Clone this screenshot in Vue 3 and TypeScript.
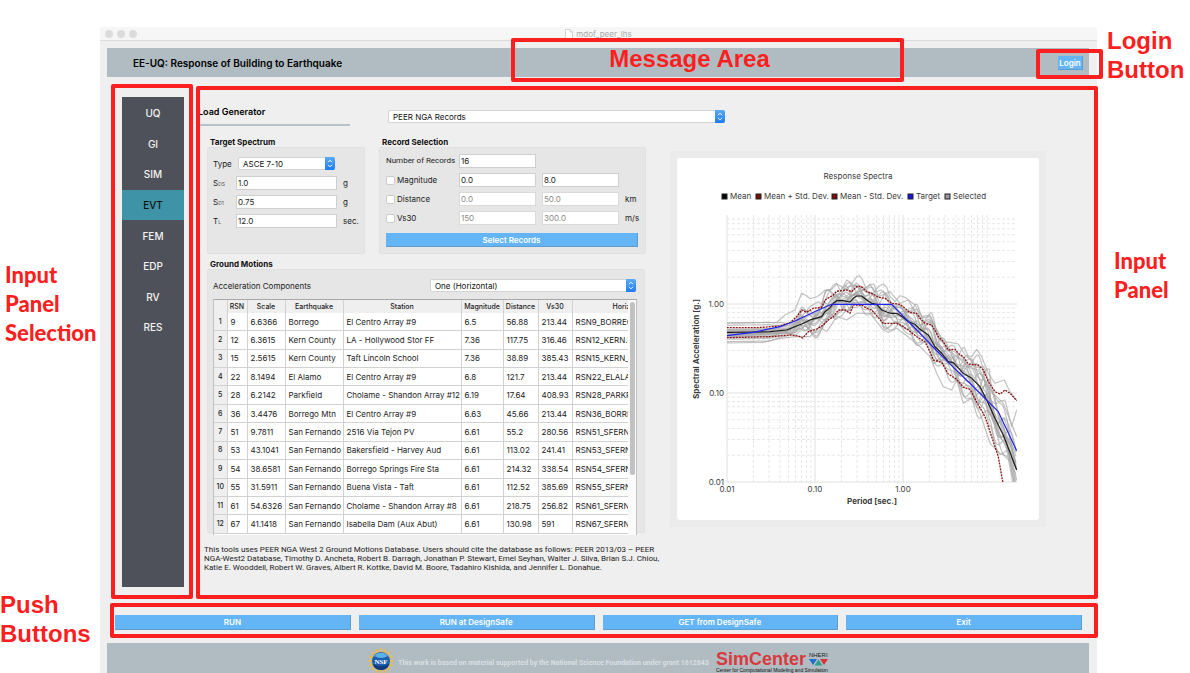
<script setup lang="ts">
import { ref } from 'vue'

type Pt = [number, number]

const sections = ['UQ', 'GI', 'SIM', 'EVT', 'FEM', 'EDP', 'RV', 'RES']
const active = ref('EVT')
const actions = ['RUN', 'RUN at DesignSafe', 'GET from DesignSafe', 'Exit']

const targetFields = ref([
  { id: 'sds', base: 'S', sub: 'DS', value: '1.0', unit: 'g' },
  { id: 'sd1', base: 'S', sub: 'D1', value: '0.75', unit: 'g' },
  { id: 'tl', base: 'T', sub: 'L', value: '12.0', unit: 'sec.' },
])
const recordCount = ref('16')
const filters = ref([
  { id: 'mag', label: 'Magnitude', min: '0.0', max: '8.0', unit: '', off: false },
  { id: 'dist', label: 'Distance', min: '0.0', max: '50.0', unit: 'km', off: true },
  { id: 'vs', label: 'Vs30', min: '150', max: '300.0', unit: 'm/s', off: true },
])

const columns = ['RSN', 'Scale', 'Earthquake', 'Station', 'Magnitude', 'Distance', 'Vs30']
const rows = [
  ['9', '6.6366', 'Borrego', 'El Centro Array #9', '6.5', '56.88', '213.44', 'RSN9_BORREGO'],
  ['12', '6.3615', 'Kern County', 'LA - Hollywood Stor FF', '7.36', '117.75', '316.46', 'RSN12_KERN.PEL'],
  ['15', '2.5615', 'Kern County', 'Taft Lincoln School', '7.36', '38.89', '385.43', 'RSN15_KERN_TAF'],
  ['22', '8.1494', 'El Alamo', 'El Centro Array #9', '6.8', '121.7', '213.44', 'RSN22_ELALAMO'],
  ['28', '6.2142', 'Parkfield', 'Cholame - Shandon Array #12', '6.19', '17.64', '408.93', 'RSN28_PARKF'],
  ['36', '3.4476', 'Borrego Mtn', 'El Centro Array #9', '6.63', '45.66', '213.44', 'RSN36_BORREGO'],
  ['51', '9.7811', 'San Fernando', '2516 Via Tejon PV', '6.61', '55.2', '280.56', 'RSN51_SFERN'],
  ['53', '43.1041', 'San Fernando', 'Bakersfield - Harvey Aud', '6.61', '113.02', '241.41', 'RSN53_SFERN'],
  ['54', '38.6581', 'San Fernando', 'Borrego Springs Fire Sta', '6.61', '214.32', '338.54', 'RSN54_SFERN'],
  ['55', '31.5911', 'San Fernando', 'Buena Vista - Taft', '6.61', '112.52', '385.69', 'RSN55_SFERN'],
  ['61', '54.6326', 'San Fernando', 'Cholame - Shandon Array #8', '6.61', '218.75', '256.82', 'RSN61_SFERN'],
  ['67', '41.1418', 'San Fernando', 'Isabella Dam (Aux Abut)', '6.61', '130.98', '591', 'RSN67_SFERN'],
]

const legend = [
  { label: 'Mean', color: '#000000', x: 45 },
  { label: 'Mean + Std. Dev.', color: '#7d0a0a', x: 79 },
  { label: 'Mean - Std. Dev.', color: '#7d0a0a', x: 155 },
  { label: 'Target', color: '#1414f0', x: 231 },
  { label: 'Selected', color: '#999999', x: 268 },
]

/* Plot frame inside the 362 x 362 card */
const left = 50
const right = 340
const top = 57
const bottom = 324
const decX = 88
const decY = 89

const gridX: { x: number; major: boolean }[] = []
const gridY: { y: number; major: boolean }[] = []
for (let d = 0; d < 3; d++)
  for (let m = 1; m < 10; m++) {
    gridX.push({ x: left + decX * (d + Math.log10(m)), major: m === 1 })
    gridY.push({ y: bottom - decY * (d + Math.log10(m)), major: m === 1 })
  }

/* Curve data in thirds of a unit, offset from the card corner by (21, 24) */
const mean: Pt[] = [[170,547],[300,545],[350,540],[395,522],[425,508],[455,500],[465,485],[480,473],[490,460],[500,452],[520,452],[540,456],[550,445],[560,438],[575,438],[590,450],[605,460],[620,463],[635,480],[650,486],[662,490],[680,490],[697,500],[715,515],[735,523],[750,538],[775,555],[795,590],[815,610],[835,635],[850,638],[880,670],[905,685],[930,710],[950,750],[975,805],[1000,855],[1040,960]]
const upper: Pt[] = [[170,533],[260,533],[330,528],[360,518],[380,500],[395,480],[410,487],[430,475],[455,472],[465,450],[490,435],[500,424],[530,420],[545,425],[560,410],[572,408],[590,425],[610,432],[625,442],[645,445],[665,460],[690,463],[705,475],[720,488],[740,490],[750,505],[765,520],[785,525],[797,545],[805,560],[820,575],[835,600],[855,598],[865,610],[880,620],[895,642],[925,645],[940,660],[955,695],[975,725],[990,732],[1005,720],[1020,730],[1040,752]]
const lower: Pt[] = [[170,563],[300,560],[360,555],[385,558],[398,564],[415,545],[440,537],[460,525],[475,510],[490,500],[505,480],[525,480],[540,490],[550,465],[575,465],[590,475],[605,480],[620,497],[640,520],[680,520],[700,530],[715,540],[740,560],[765,575],[780,605],[790,630],[815,637],[835,672],[860,688],[880,712],[900,718],[925,765],[945,800],[965,860],[985,920],[998,995],[1040,1130]]
const target: Pt[] = [[170,557],[250,547],[330,530],[375,513],[440,482],[485,463],[665,463],[740,540],[795,597],[835,637],[905,705],[985,785],[1040,902]]

function at(c: Pt[], x: number): number {
  for (let i = 1; i < c.length; i++) {
    if (x <= c[i][0]) {
      const [x0, y0] = c[i - 1]
      const [x1, y1] = c[i]
      return y0 + ((y1 - y0) * (x - x0)) / (x1 - x0)
    }
  }
  return c[c.length - 1][1]
}
function path(c: Pt[]): string {
  return 'M' + c.map(([x, y]) => `${((x - 21) / 3).toFixed(1)} ${((y - 24) / 3).toFixed(1)}`).join('L')
}

const shelf = [519, 526, 538, 540, 542, 544, 548, 550, 551, 553, 555, 557, 560, 562, 567, 575]
const records: string[] = shelf.map((start, i) => {
  const pts: Pt[] = []
  const bias = Math.sin(i * 2.4) * 0.7
  for (let x = 170; x <= 1040; x += 4) {
    const m = at(mean, x)
    const w =
      bias +
      0.7 * Math.sin(x / (20 + (i % 5) * 4) + i * 1.9) +
      0.45 * Math.sin(x / (9 + (i % 4)) + i * 3.1)
    const spread = w < 0 ? m - at(upper, x) : at(lower, x) - m
    const ease = Math.min(1, Math.max(0, (x - 300) / 140))
    const damp = x > 960 ? 0.7 : 1
    pts.push([x, m + (start - 547) * (1 - ease) + w * Math.min(spread, 70) * ease * damp])
  }
  return path(pts)
})
records.push(
  path([[170,519],[320,517],[345,495],[375,480],[385,455],[395,430],[410,437],[420,446],[440,440],[455,430],[465,420],[485,418],[500,402],[515,410],[530,420],[550,395],[560,380],[568,377],[577,388],[588,415],[600,402],[612,425],[628,408],[640,402],[650,412],[660,440],[675,455],[690,437],[705,442],[735,465],[755,500],[780,495],[800,540],[822,575],[845,578],[865,582],[885,615],[905,620],[920,598],[935,620],[955,670],[975,700],[1003,690],[1020,725],[1040,750]]),
  path([[170,558],[340,548],[380,520],[395,500],[420,470],[445,455],[460,465],[475,430],[490,405],[500,400],[512,425],[530,390],[545,400],[560,430],[600,405],[612,402],[625,440],[660,425],[690,460],[715,450],[745,505],[780,500],[800,540],[830,600],[880,630],[900,650],[920,640],[945,690],[970,730],[1000,760],[1020,810],[1040,860]]),
  path([[170,579],[280,577],[330,565],[380,560],[420,560],[450,530],[470,545],[500,500],[530,510],[560,490],[600,490],[640,540],[655,547],[680,535],[720,565],[750,590],[780,620],[800,670],[820,710],[845,720],[860,690],[880,760],[905,745],[930,790],[960,880],[990,910],[1025,925],[1040,990]]),
  path([[170,550],[320,550],[400,520],[460,500],[500,455],[560,430],[620,470],[700,500],[780,560],[850,640],[925,660],[960,720],[985,755],[1005,750],[1025,830],[1040,780]]),
)
</script>

<template>
  <div class="page">
    <aside class="gutter">
      <p class="note note-selection">Input<br />Panel<br />Selection</p>
      <p class="note note-push">Push<br />Buttons</p>
    </aside>

    <div class="window">
      <div class="titlebar">
        <span class="dots"><i></i><i></i><i></i></span>
        <span class="doc">
          <svg width="8" height="10" viewBox="0 0 8 10"><path d="M.5 .5h4.5l2.5 2.5v6.500h-7zM5 .5v2.500h2.500" fill="#fff" stroke="#d2d2d2" /></svg>
          mdof_peer_lhs
        </span>
      </div>

      <header class="header">
        <h1>EE-UQ: Response of Building to Earthquake</h1>
        <div class="message frame-box">Message Area</div>
        <div class="login frame-box"><button type="button" class="blue">Login</button></div>
      </header>

      <div class="body">
        <div class="side">
          <nav>
            <button v-for="s in sections" :key="s" type="button" :class="{ on: s === active }" @click="active = s">{{ s }}</button>
          </nav>
          <span class="frame"></span>
        </div>

        <main class="panel">
          <div class="top">
            <h2><label for="generator">Load Generator</label></h2>
            <span class="combo combo-wide">
              <select id="generator"><option>PEER NGA Records</option></select>
              <svg viewBox="0 0 10 13"><path d="M3 5.200l2-2 2 2M3 7.800l2 2 2-2" /></svg>
            </span>
          </div>

          <div class="columns">
            <div class="left">
              <div class="groups">
                <section class="group target">
                  <h3>Target Spectrum</h3>
                  <div class="box target-grid">
                    <label for="type">Type</label>
                    <span class="combo combo-type">
                      <select id="type"><option>ASCE 7-10</option></select>
                      <svg viewBox="0 0 10 13"><path d="M3 5.200l2-2 2 2M3 7.800l2 2 2-2" /></svg>
                    </span>
                    <span></span>
                    <template v-for="f in targetFields" :key="f.id">
                      <label :for="f.id">{{ f.base }}<small>{{ f.sub }}</small></label>
                      <input :id="f.id" v-model="f.value" type="text" />
                      <span>{{ f.unit }}</span>
                    </template>
                  </div>
                </section>

                <section class="group record">
                  <h3>Record Selection</h3>
                  <div class="box">
                    <div class="record-grid">
                      <label for="count" class="count">Number of Records</label>
                      <input id="count" v-model="recordCount" type="text" />
                      <span></span><span></span>
                      <template v-for="f in filters" :key="f.id">
                        <label class="check"><input type="checkbox" />{{ f.label }}</label>
                        <input v-model="f.min" type="text" :disabled="f.off" :aria-label="f.label + ' minimum'" />
                        <input v-model="f.max" type="text" :disabled="f.off" :aria-label="f.label + ' maximum'" />
                        <span>{{ f.unit }}</span>
                      </template>
                    </div>
                    <button type="button" class="blue select-records">Select Records</button>
                  </div>
                </section>
              </div>

              <section class="group motions">
                <h3>Ground Motions</h3>
                <div class="box motions-box">
                  <div class="accel">
                    <label for="accel">Acceleration Components</label>
                    <span class="combo combo-accel">
                      <select id="accel"><option>One (Horizontal)</option></select>
                      <svg viewBox="0 0 10 13"><path d="M3 5.200l2-2 2 2M3 7.800l2 2 2-2" /></svg>
                    </span>
                  </div>
                  <div class="sheet">
                    <table>
                      <colgroup>
                        <col class="c0" /><col class="c1" /><col class="c2" /><col class="c3" /><col class="c4" />
                        <col class="c5" /><col class="c6" /><col class="c7" /><col />
                      </colgroup>
                      <thead>
                        <tr>
                          <th></th>
                          <th v-for="c in columns" :key="c">{{ c }}</th>
                          <th class="last">Horizontal</th>
                        </tr>
                      </thead>
                      <tbody>
                        <tr v-for="(r, i) in rows" :key="r[0]">
                          <th>{{ i + 1 }}</th>
                          <td v-for="(c, j) in r" :key="j">{{ c }}</td>
                        </tr>
                      </tbody>
                    </table>
                    <div class="scroll"><i></i></div>
                  </div>
                </div>
              </section>

              <p class="cite">
                This tools uses PEER NGA West 2 Ground Motions Database. Users should cite the database as follows: PEER 2013/03 – PEER<br />
                NGA-West2 Database, Timothy D. Ancheta, Robert B. Darragh, Jonathan P. Stewart, Emel Seyhan, Walter J. Silva, Brian S.J. Chiou,<br />
                Katie E. Wooddell, Robert W. Graves, Albert R. Kottke, David M. Boore, Tadahiro Kishida, and Jennifer L. Donahue.
              </p>
            </div>

            <div class="chart">
              <svg class="card" viewBox="0 0 362 362">
                <defs><clipPath id="plot"><rect :x="left" :y="top" :width="right - left" :height="bottom - top" /></clipPath></defs>
                <text x="181" y="21" text-anchor="middle">Response Spectra</text>
                <g v-for="l in legend" :key="l.x">
                  <rect :x="l.x" y="36" width="5" height="5" :fill="l.color" stroke="#222" />
                  <text :x="l.x + 8" y="41">{{ l.label }}</text>
                </g>
                <g class="grid">
                  <line v-for="g in gridX" :key="g.x" :x1="g.x" :x2="g.x" :y1="top" :y2="bottom" :class="{ major: g.major }" />
                  <line v-for="g in gridY" :key="g.y" :x1="left" :x2="right" :y1="g.y" :y2="g.y" :class="{ major: g.major }" />
                </g>
                <g clip-path="url(#plot)" fill="none" stroke-linejoin="round">
                  <path v-for="(d, i) in records" :key="i" :d="d" class="rec" />
                  <path :d="path(mean)" class="mean" />
                  <path :d="path(upper)" class="dev" />
                  <path :d="path(lower)" class="dev" />
                  <path :d="path(target)" class="aim" />
                </g>
                <g text-anchor="end">
                  <text x="47" y="149">1.00</text>
                  <text x="47" y="238">0.10</text>
                  <text x="47" y="327">0.01</text>
                </g>
                <g text-anchor="middle">
                  <text x="50" y="334">0.01</text>
                  <text x="138" y="334">0.10</text>
                  <text x="226" y="334">1.00</text>
                  <text class="axis" x="195" y="346">Period [sec.]</text>
                  <text class="axis" transform="translate(22 191) rotate(-90)">Spectral Acceleration [g.]</text>
                </g>
              </svg>
            </div>
          </div>
          <span class="frame"></span>
        </main>
      </div>

      <div class="actions">
        <button v-for="a in actions" :key="a" type="button" class="blue">{{ a }}</button>
        <span class="frame"></span>
      </div>

      <footer class="footer">
        <svg class="nsf" width="26" height="26" viewBox="-13 -13 26 26">
          <g fill="#e2bb5a">
            <path v-for="n in 16" :key="n" d="M-1.300 -8L-1.200 -11.600a1.200 1.200 0 0 1 2.400 0L1.300 -8z" :transform="`rotate(${n * 22.5})`" />
          </g>
          <circle r="9" fill="#1c5fae" />
          <path d="M-7 -5A9 9 0 0 1 7 -5Q0 -1 -7 -5z" fill="#5cb2e6" />
          <path d="M-8.500 3A9 9 0 0 0 8.500 3Q0 7 -8.500 3z" fill="#123a7c" />
          <text y="3" text-anchor="middle">NSF</text>
        </svg>
        <span class="grant">This work is based on material supported by the National Science Foundation under grant 1612843</span>
        <span class="sim">
          <span class="sim-top">
            <b>SimCenter</b>
            <span class="nheri">
              NHERI
              <svg width="19" height="7" viewBox="0 0 19 7"><path d="M0 0h8L4 6z" fill="#1e6fd0" /><path d="M5.500 6.500h8L9.500 .5z" fill="#2fa08c" /><path d="M11 0h8l-4 6z" fill="#d8343c" /></svg>
            </span>
          </span>
          <span class="sim-sub">Center for Computational Modeling and Simulation</span>
        </span>
      </footer>
    </div>

    <aside class="gutter">
      <p class="note note-login">Login<br />Button</p>
      <p class="note note-panel">Input<br />Panel</p>
    </aside>
  </div>
</template>

<style>
html,
body {
  margin: 0;
  background: #fff;
}
</style>

<style scoped>
* {
  box-sizing: border-box;
}
.page {
  display: grid;
  grid-template-columns: 100px minmax(0, 1fr) 93px;
  height: 100vh;
  min-height: 673px;
  overflow: hidden;
  font: 8px/10px Inter, 'Liberation Sans', sans-serif;
  color: #222;
}
h1,
h2,
h3,
p {
  margin: 0;
}
button,
input,
select {
  font: inherit;
  color: inherit;
  border: 0;
  border-radius: 0;
  margin: 0;
  padding: 0;
}
.gutter {
  position: relative;
}
.note {
  position: absolute;
  color: #fc1f1f;
  font: bold 24px/29px 'Liberation Sans', Arial, sans-serif;
  z-index: 3;
}
.note-selection,
.note-panel {
  font: 900 22px/29px Lato, sans-serif;
}
.note-selection {
  left: 5px;
  top: 260px;
}
.note-push {
  left: 0;
  top: 590px;
}
.note-login {
  left: 10px;
  top: 26px;
}
.note-panel {
  left: 17px;
  top: 246px;
}
.window {
  display: flex;
  flex-direction: column;
  min-width: 0;
  margin-top: 27px;
  background: #efefef;
  border-radius: 4px 4px 0 0;
}
.titlebar {
  position: relative;
  height: 14px;
  background: #f6f6f6;
  border-bottom: 1px solid #dcdcdc;
  border-radius: 4px 4px 0 0;
  display: flex;
  align-items: center;
  justify-content: center;
  color: #a9a9a9;
}
.dots {
  position: absolute;
  left: 5px;
  display: flex;
  gap: 4px;
}
.dots i {
  width: 8px;
  height: 8px;
  border-radius: 50%;
  background: #dcdcdc;
}
.doc {
  display: flex;
  align-items: center;
  gap: 3px;
}
.header {
  position: relative;
  display: flex;
  align-items: center;
  height: 29px;
  margin: 7px 8px 0 7px;
  padding-left: 26px;
  background: #b0bcc2;
}
h1 {
  font-size: 10px;
  line-height: 12px;
  font-weight: 600;
  color: #000;
}
.frame-box {
  position: absolute;
  border: 4px solid #fc1f1f;
  border-radius: 2px;
  z-index: 2;
}
.message {
  left: 404px;
  right: 185px;
  top: -10px;
  height: 44px;
  padding-right: 36px;
  text-align: center;
  color: #fc1f1f;
  font: bold 24px/33px 'Liberation Sans', Arial, sans-serif;
}
.login {
  right: -14px;
  top: 1px;
  width: 67px;
  height: 30px;
  padding: 3px 0 0 18px;
}
.blue {
  background: #64b5f6;
  color: #fff;
  font-weight: 600;
  border-right: 1px solid #5f9dcc;
  border-bottom: 1px solid #5f9dcc;
  text-align: center;
}
.login .blue {
  display: block;
  width: 25px;
  height: 14px;
}
.frame {
  position: absolute;
  inset: 0;
  border: 4px solid #fc1f1f;
  border-radius: 2px;
  pointer-events: none;
}
.body {
  flex: 1;
  min-height: 0;
  display: flex;
  gap: 3px;
  margin: 7px -1px 0 11px;
}
.side {
  position: relative;
  flex: 0 0 82px;
  padding: 13px 9px 12px 11px;
}
nav {
  height: 100%;
  display: flex;
  flex-direction: column;
  padding-top: 1px;
  background: #4e5159;
}
nav button {
  flex: 0 0 6.25%;
  background: transparent;
  color: #f4f4f4;
  font-size: 10px;
  line-height: 12px;
  font-weight: 500;
}
nav button.on {
  background: #3f93a6;
  color: #111;
}
.panel {
  position: relative;
  flex: 1;
  min-width: 0;
  margin-top: 2px;
}
.top {
  display: flex;
  align-items: flex-start;
  padding: 20px 0 0 2px;
}
h2 {
  width: 152px;
  padding-bottom: 6px;
  border-bottom: 2px solid #b7c2c8;
  font-size: 9px;
  line-height: 12px;
  font-weight: 600;
  color: #000;
}
.combo {
  position: relative;
  display: block;
  height: 13px;
}
.combo select {
  appearance: none;
  display: block;
  width: 100%;
  height: 13px;
  padding: 0 12px 0 4px;
  background: #fff;
  border: 1px solid #d4d4d4;
  border-radius: 2px;
  line-height: 10px;
  color: #111;
}
.combo svg {
  position: absolute;
  right: 0;
  top: 0;
  width: 10px;
  height: 13px;
  background: linear-gradient(#5aabf8, #1f7cf6);
  border-radius: 0 2px 2px 0;
  fill: none;
  stroke: #fff;
  pointer-events: none;
}
.combo-wide {
  width: 337px;
  margin: 4px 0 0 38px;
}
.combo-type {
  margin: 0 2px;
}
.combo-accel {
  width: 206px;
}
.columns {
  display: flex;
  align-items: flex-start;
}
.left {
  flex: 0 0 449px;
  min-width: 0;
  padding: 11px 0 0 11px;
}
.groups {
  display: flex;
  gap: 14px;
}
.target {
  flex: 0 0 158px;
}
.record {
  flex: 1;
}
.groups .box {
  height: 107px;
}
h3 {
  padding-left: 3px;
  font-size: 8px;
  line-height: 10px;
  color: #111;
}
.box {
  background: #e6e6e6;
  border: 1px solid #e1e1e1;
  border-radius: 2px;
}
input[type='text'] {
  width: 100%;
  min-width: 0;
  height: 14px;
  padding: 0 1px;
  background: #fff;
  border: 1px solid #cfcfcf;
}
input:disabled {
  color: #8a8a8a;
  border-color: #dadada;
}
.target-grid {
  display: grid;
  grid-template-columns: 23px 101px 20px;
  grid-template-rows: 15px 14px 14px 14px;
  row-gap: 5px;
  align-items: center;
  align-content: start;
  padding: 8px 0 0 5px;
}
.target-grid input + span {
  padding-left: 6px;
}
small {
  font-size: 5px;
  color: #555;
}
.record-grid {
  display: grid;
  grid-template-columns: 73px 77px 6px 77px 6px 20px;
  grid-auto-rows: 14px;
  row-gap: 5px;
  align-items: center;
  padding: 6px 0 0 6px;
  white-space: nowrap;
}
.record-grid > :nth-child(4n + 1) {
  grid-column: 1;
}
.record-grid > :nth-child(4n + 2) {
  grid-column: 2;
}
.record-grid > :nth-child(4n + 3) {
  grid-column: 4;
}
.record-grid > :nth-child(4n) {
  grid-column: 6;
}
.count {
  font-family: Roboto, sans-serif;
}
.check {
  display: flex;
  align-items: center;
  gap: 2px;
}
.check input {
  appearance: none;
  width: 9px;
  height: 9px;
  background: #fff;
  border: 1px solid #cccccc;
  border-radius: 2px;
}
.check input:checked {
  background: #1f7cf6;
}
.select-records {
  display: block;
  width: 252px;
  height: 14px;
  margin: 8px 0 0 6px;
}
.motions {
  margin-top: 5px;
}
.motions-box {
  height: 264px;
  padding: 9px 7px 0 5px;
}
.accel {
  display: flex;
  justify-content: space-between;
  align-items: center;
  height: 13px;
  padding-right: 1px;
}
.sheet {
  display: flex;
  height: 236px;
  margin-top: 7px;
  border: 1px solid #c2c2c2;
  border-top-color: #a8a8a8;
  border-bottom: 0;
  background: #fff;
  overflow: hidden;
}
table {
  flex: 1;
  min-width: 0;
  width: 100%;
  height: 234px;
  table-layout: fixed;
  border-collapse: collapse;
}
.c0 { width: 13px; }
.c1 { width: 20px; }
.c2 { width: 38px; }
.c3 { width: 58px; }
.c4 { width: 118px; }
.c5 { width: 42px; }
.c6 { width: 35px; }
.c7 { width: 34px; }
td,
th {
  padding: 0 0 0 3px;
  overflow: hidden;
  white-space: nowrap;
  border-right: 1px solid #d2d2d2;
  border-bottom: 1px solid #d2d2d2;
}
th {
  padding: 0;
  background: #efefef;
  font-size: 7px;
  font-weight: 500;
  text-align: center;
}
thead th {
  height: 13px;
  border-bottom: 0;
}
thead .last {
  padding-left: 40px;
  text-align: left;
}
tr > :last-child {
  border-right: 0;
}
.scroll {
  flex: 0 0 8px;
  padding: 2px 1px 0 2px;
  background: #fafafa;
}
.scroll i {
  display: block;
  width: 5px;
  height: 173px;
  border-radius: 3px;
  background: #c1c1c1;
}
.cite {
  margin: 12px 0 0 -3px;
  font: 8px/9px Roboto, sans-serif;
  white-space: nowrap;
}
.chart {
  flex: 0 1 376px;
  min-width: 0;
  margin: 25px 0 0 25px;
  padding: 7px;
  background: #ebebeb;
}
.card {
  display: block;
  width: 100%;
  background: #fff;
  border-radius: 3px;
  font-size: 8px;
  fill: #3c3c3c;
}
.grid line {
  stroke: #e8e8e8;
  stroke-dasharray: 3 2;
}
.grid line.major {
  stroke: #e0e0e0;
  stroke-dasharray: none;
}
.rec {
  stroke: #a8a8a8;
  stroke-width: 1.2;
  stroke-opacity: 0.7;
}
.mean {
  stroke: #1c1c1c;
  stroke-width: 1.2;
}
.aim {
  stroke: #2222ee;
  stroke-width: 1.2;
}
.dev {
  stroke: #8b1010;
  stroke-width: 1.3;
  stroke-dasharray: 2 1;
}
.axis {
  font-weight: 700;
}
.actions {
  position: relative;
  display: flex;
  gap: 8px;
  height: 35px;
  margin: 4px -1px 0 10px;
  padding: 12px 16px 0 5px;
}
.actions .blue {
  flex: 1;
  height: 15px;
}
.footer {
  display: flex;
  justify-content: center;
  align-items: flex-start;
  height: 30px;
  margin: 5px 8px 0 7px;
  padding-top: 5px;
  background: #b0bcc2;
  overflow: hidden;
}
.nsf text {
  font: bold 7px 'Liberation Serif', serif;
  fill: #fff;
}
.grant {
  margin: 10px 7px 0 4px;
  font: bold 7px/10px Roboto, sans-serif;
  color: #d9dfe2;
  white-space: nowrap;
}
.sim {
  display: flex;
  flex-direction: column;
  margin-top: 3px;
}
.sim-top {
  display: flex;
  gap: 3px;
}
.sim b {
  font: 900 18px/16px 'Liberation Sans', Arial, sans-serif;
  color: #d93a3c;
}
.nheri {
  display: flex;
  flex-direction: column;
  font: 6px/8px 'Liberation Sans', Arial, sans-serif;
}
.sim-sub {
  font: 5px/6px 'Liberation Sans', Arial, sans-serif;
  white-space: nowrap;
  color: #111;
}
</style>
